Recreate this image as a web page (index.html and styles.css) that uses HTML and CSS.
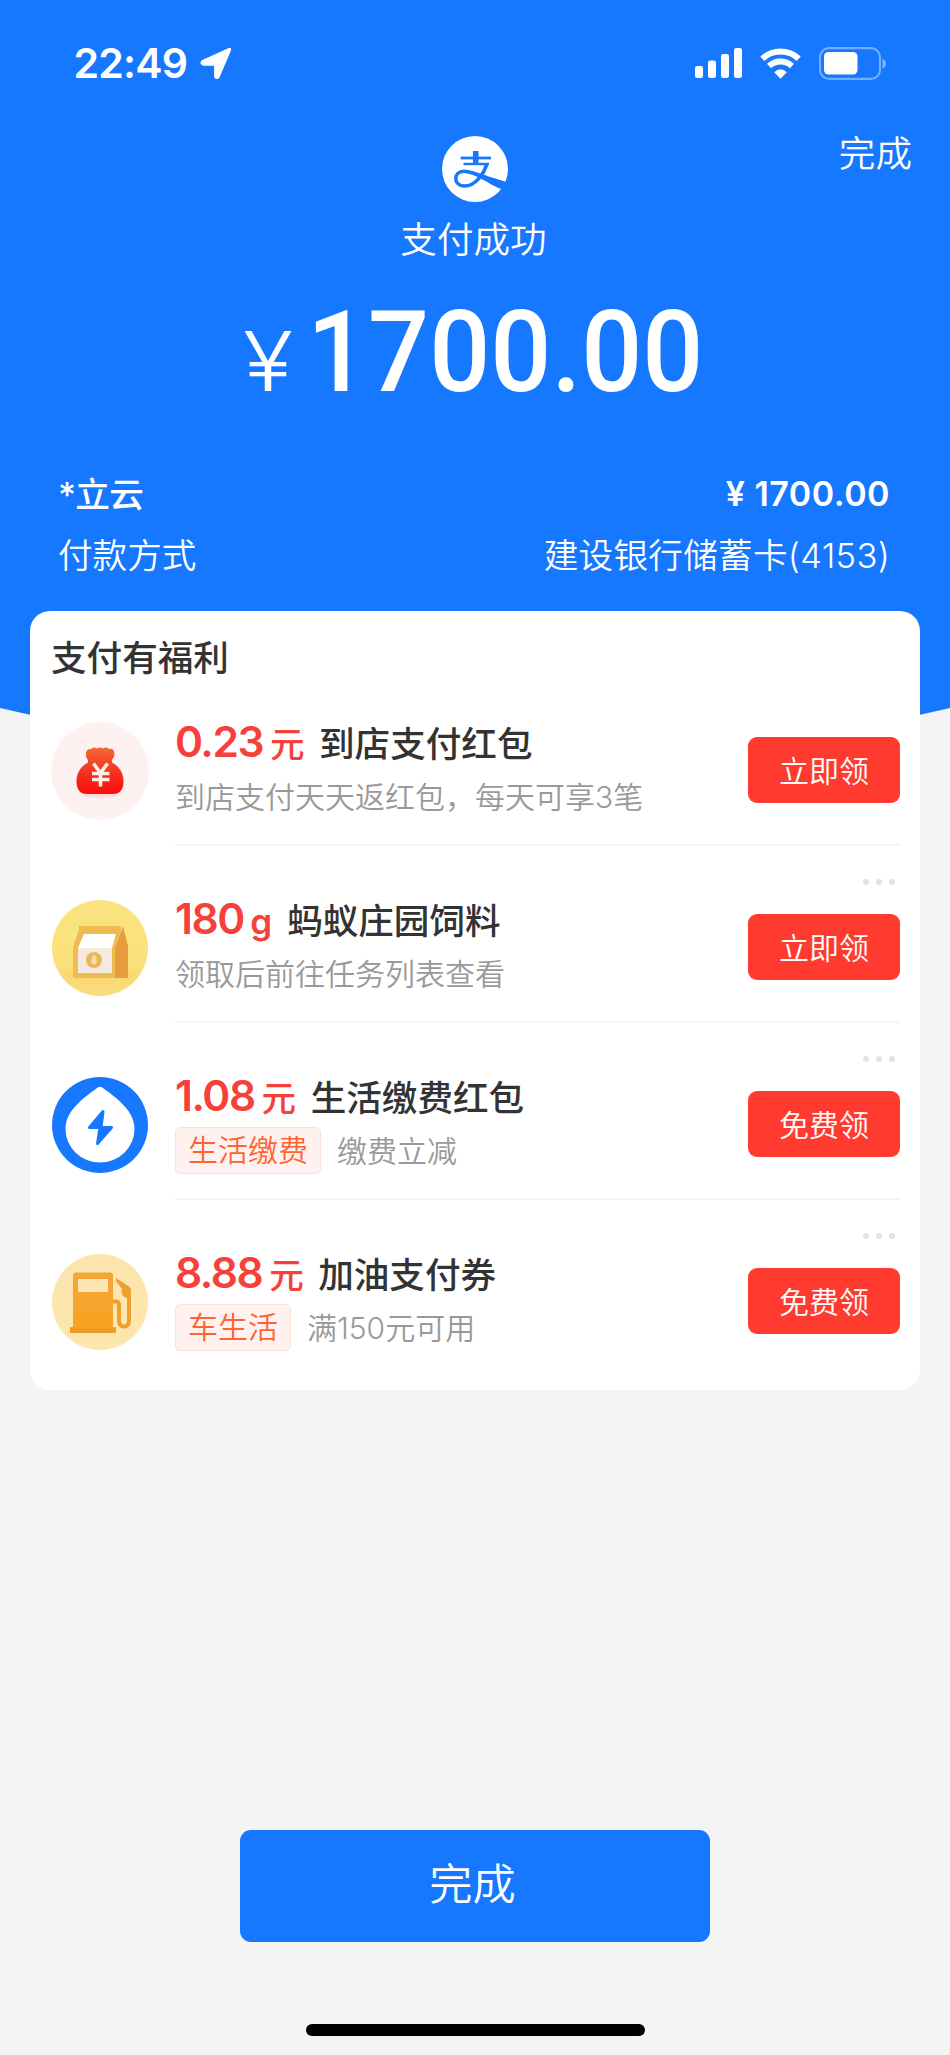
FILE: index.html
```html
<!DOCTYPE html>
<html lang="zh-CN">
<head>
<meta charset="utf-8">
<title>支付成功</title>
<link rel="stylesheet" href="styles.css">
</head>
<body>
<header class="hero">
  <div class="status">
    <div class="status-left">
      <span class="clock">22:49</span>
      <svg class="loc" viewBox="0 0 32 33"><path d="M29.500 2.500 17.800 30Q16.500 31 15.800 29.500V17H3.500Q1 16 3 14.500Z" fill="#fff" stroke="#fff" stroke-width="3.400" stroke-linejoin="round"/></svg>
    </div>
    <div class="status-right">
      <svg width="48" height="30" viewBox="0 0 48 30" fill="#fff"><rect y="18" width="8" height="12" rx="2.300"/><rect x="13" y="12.500" width="8" height="17.500" rx="2.300"/><rect x="26" y="6" width="8" height="24" rx="2.300"/><rect x="39" width="8" height="30" rx="2.300"/></svg>
      <svg class="wifi" width="41" height="31" viewBox="0 0 41 31"><g fill="none" stroke="#fff" stroke-width="6"><path d="M2.300 10.700A26.500 26.500 0 0 1 38.700 10.700"/><path d="M9 18A17 17 0 0 1 32 18"/></g><path d="M14.200 24.200Q20.500 18.500 26.800 24.200L20.500 30.800Z" fill="#fff"/></svg>
      <svg class="battery" width="68" height="33" viewBox="0 0 68 33"><rect x="1" y="1.200" width="60" height="30.600" rx="9" fill="none" stroke="#fff" stroke-opacity=".4" stroke-width="2.200"/><rect x="5" y="5" width="33.500" height="22.500" rx="4.500" fill="#fff"/><path d="M63.500 11.500Q67 13 67 16.500T63.500 21.500Z" fill="#fff" fill-opacity=".45"/></svg>
    </div>
  </div>
  <div class="topbar">
    <span></span>
    <svg class="logo" viewBox="0 0 66 66"><circle cx="33" cy="33" r="33" fill="#fff"/><g fill="none" stroke="#1677ff"><path d="M18.700 22H49" stroke-width="2.800"/><path d="M33.700 15V28" stroke-width="5.500"/><path d="M21.500 28H47" stroke-width="2.400"/><path d="M45 27.500C42 38 33 50.500 22 50C11 49.500 11 35.500 22 35.300" stroke-width="3.600"/></g><path d="M22 33.500C32 34 41 39.500 66 46.200L61 54C46 48 34 37.500 22 37Z" fill="#1677ff"/></svg>
    <a class="top-done">完成</a>
  </div>
  <p class="state">支付成功</p>
  <p class="amount"><span class="yen">¥</span><span class="digits">1700.00</span></p>
  <dl class="detail">
    <div class="detail-row strong"><dt>*立云</dt><dd class="sum">¥ 1700.00</dd></div>
    <div class="detail-row"><dt>付款方式</dt><dd class="bank">建设银行储蓄卡(4153)</dd></div>
  </dl>
</header>

<main class="card">
  <h2 class="card-title">支付有福利</h2>
  <section class="offer">
    <svg class="pic" viewBox="0 0 98 98">
      <defs><linearGradient id="bag" x1="0" y1="0" x2="0" y2="1"><stop offset="0" stop-color="#f36a33"/><stop offset=".55" stop-color="#f5301f"/><stop offset="1" stop-color="#fb0d0d"/></linearGradient></defs>
      <circle cx="49" cy="49" r="49" fill="#fef1f1"/>
      <ellipse cx="49" cy="73" rx="18" ry="3" fill="#fcdcdc"/>
      <path d="M37 38C33 33 35 26 40 27Q43 24.500 46 26.500Q49 24.500 52 26.500Q55 24.500 58 27C64 25.500 65 33 61 38L61 40.500C68 44 72.500 51 72.500 59Q72.500 72 62 72H36Q25.500 72 25.500 59C25.500 51 30 44 37 40.500Z" fill="url(#bag)"/>
      <path d="M42.500 41.500 49.500 51 56.500 41.500M49.500 50V64.500M41 51.500H58.500M41 57.500H58.500" fill="none" stroke="#fff2e6" stroke-width="3.600"/>
    </svg>
    <div class="offer-body">
      <div class="offer-main"><h3><b>0.23</b><i>元</i>到店支付红包</h3><p>到店支付天天返红包，每天可享3笔</p></div>
      <a class="get">立即领</a>
    </div>
  </section>
  <section class="offer">
    <svg class="pic" viewBox="0 0 98 98">
      <defs><linearGradient id="sun" x1="0" y1="0" x2="0" y2="1"><stop offset="0" stop-color="#fae480"/><stop offset=".68" stop-color="#fae17a"/><stop offset=".78" stop-color="#f9d871"/><stop offset="1" stop-color="#fadd7c"/></linearGradient></defs>
      <circle cx="49" cy="49" r="48" fill="url(#sun)"/>
      <path d="M28 27H70V31L64 49V79H22V48L28 31Z" fill="#eebb51"/>
      <path d="M72 27 77 47V79H64V49Z" fill="#e79d3d"/>
      <path d="M33 35H65L61 49H27Z" fill="#fff"/><path d="M27 49H61V74H27Z" fill="#f6e9df"/>
      <circle cx="43" cy="61" r="8" fill="#e9b757"/><path d="M43 55Q39 61 41 65H45Q47 61 43 55Z" fill="#f4ddb0"/>
    </svg>
    <div class="offer-body">
      <div class="offer-main"><h3><b>180</b><i class="latin">g</i>蚂蚁庄园饲料</h3><p>领取后前往任务列表查看</p></div>
      <a class="get">立即领</a>
      <span class="more"></span>
    </div>
  </section>
  <section class="offer">
    <svg class="pic" viewBox="0 0 98 98">
      <circle cx="49" cy="49" r="48" fill="#1677ff"/>
      <path d="M46 12Q49 9.500 52 12C65 22 83.500 34 83.500 53A34.500 33.500 0 0 1 14.500 53C14.500 34 33 22 46 12Z" fill="#fff"/>
      <path d="M52 35.500 38.500 51.500H49L46.500 67.500 60.500 51.500H50Z" fill="#1677ff" stroke="#1677ff" stroke-width="3" stroke-linejoin="round"/>
    </svg>
    <div class="offer-body">
      <div class="offer-main"><h3><b>1.08</b><i>元</i>生活缴费红包</h3><p><span class="tag">生活缴费</span>缴费立减</p></div>
      <a class="get">免费领</a>
      <span class="more"></span>
    </div>
  </section>
  <section class="offer">
    <svg class="pic" viewBox="0 0 98 98">
      <defs><linearGradient id="gas" x1="0" y1="0" x2="0" y2="1"><stop offset="0" stop-color="#f2a63a"/><stop offset="1" stop-color="#f9a21d"/></linearGradient></defs>
      <circle cx="49" cy="49" r="48" fill="#fde6ae"/>
      <path d="M62 48.500H65Q68 48.500 68 52V67Q68 73.500 73 73.500T78 67V42" fill="none" stroke="#eea02f" stroke-width="4"/>
      <path d="M65 25 78 33.500Q80 35 80 37V45H76Q69 43 71 36L65 28Z" fill="#eea02f"/>
      <path d="M22 22Q22 19.500 25 19.500H59Q62 19.500 62 22V74H65V80H19V74H22Z" fill="url(#gas)"/>
      <path d="M19 75H65V80H19Z" fill="#ee9b25"/>
      <rect x="27" y="26" width="30" height="13" fill="#fde6b2"/>
    </svg>
    <div class="offer-body">
      <div class="offer-main"><h3><b>8.88</b><i>元</i>加油支付券</h3><p><span class="tag">车生活</span>满150元可用</p></div>
      <a class="get">免费领</a>
      <span class="more"></span>
    </div>
  </section>
</main>

<footer class="foot">
  <button class="finish">完成</button>
  <div class="home-bar"></div>
</footer>
</body>
</html>
```

FILE: styles.css
```css
* { box-sizing: border-box; }
body, h2, h3, p, dl, dd { margin: 0; }
body {
  width: 950px;
  height: 2055px;
  display: flex;
  flex-direction: column;
  background: #f4f4f4;
  font-family: Inter, "Noto Sans CJK SC", sans-serif;
  color: #333;
  overflow: hidden;
}
svg { display: block; flex: none; }

.hero {
  height: 730px;
  flex: none;
  background: #1677ff;
  color: #fff;
  clip-path: polygon(0 0, 100% 0, 100% 708px, 919px 715px, 50% 730px, 31px 715px, 0 708px);
}
.status { display: flex; justify-content: space-between; align-items: center; height: 126px; padding: 0 63px 0 73.5px; }
.status-left, .status-right { display: flex; align-items: center; }
.clock { font-size: 41px; font-weight: 600; letter-spacing: -0.8px; line-height: 50px; }
.loc { width: 32px; height: 33px; margin-left: 13px; }
.wifi { margin-left: 17px; }
.battery { margin-left: 18px; }

.topbar { display: grid; grid-template-columns: 1fr 66px 1fr; height: 76px; padding: 10px 38px 0 37px; }
.logo { width: 66px; height: 66px; }
.top-done { justify-self: end; font-size: 36.6px; line-height: 37px; font-weight: 350; }
.state { text-align: center; padding-right: 3px; font-size: 36.6px; line-height: 50px; margin-top: 13px; font-weight: 350; }

.amount { display: flex; align-items: baseline; height: 150px; margin-top: 12px; padding-left: 242.5px; line-height: 150px; }
.yen { width: 64.5px; font-size: 82.5px; font-weight: 350; transform: scaleX(1.12); transform-origin: left; }
.digits { font-family: Roboto, sans-serif; font-weight: 500; font-size: 114px; transform: scaleX(.943); transform-origin: left; }

.detail { padding: 37px 60px 0 58px; }
.detail-row { display: flex; justify-content: space-between; height: 61px; line-height: 60px; font-size: 34.6px; font-weight: 350; }
.detail-row.strong { font-weight: 500; }
.strong dt { letter-spacing: -0.7px; }
.detail .sum { font-size: 34px; font-weight: 600; letter-spacing: .5px; }
.bank { letter-spacing: .3px; }

.card {
  position: relative;
  flex: none;
  width: 890px;
  height: 779px;
  margin: -119px 0 0 30px;
  padding: 25px 20px 0 21px;
  border-radius: 20px;
  background: #fff;
}
.card-title { font-size: 35.6px; font-weight: 500; line-height: 46px; height: 33px; }
.offer { display: grid; grid-template-columns: 98px 1fr; column-gap: 26px; height: 177px; }
.pic { width: 98px; height: 98px; margin-top: 53px; }
.offer-body { position: relative; display: flex; justify-content: space-between; border-bottom: 2px solid #f5f5f5; }
.offer:last-child .offer-body { border-bottom: 0; }
.offer-main { padding-top: 47.5px; }
.offer h3 { height: 49px; display: flex; align-items: baseline; font-size: 35.6px; font-weight: 500; line-height: 49px; }
.offer b { color: #f6403a; font-size: 42.5px; font-weight: 600; letter-spacing: -1.5px; }
.offer i { color: #f6403a; font-size: 34.6px; font-weight: 500; font-style: normal; margin: 0 14.5px 0 7px; }
.offer i.latin { font-size: 35px; font-weight: 600; margin-left: 6.5px; margin-right: 15px; }
.offer p { display: flex; align-items: center; height: 47px; margin-top: 5.5px; font-size: 30px; font-weight: 350; color: #999; }
.tag { flex: none; height: 47px; line-height: 44px; padding: 0 12px; margin: 4px 16px 0 0; border: 1.5px solid #fde0d9; border-radius: 5px; background: #fef2f0; color: #ff6430; }
.get { width: 152px; height: 66px; margin-top: 68px; border-radius: 9px; background: #ff3b30; color: #fff; font-size: 30px; font-weight: 350; line-height: 68px; text-align: center; }
.more { position: absolute; right: 31px; top: 33px; width: 6px; height: 6px; border-radius: 50%; background: #e3e3e3; box-shadow: 13px 0 #e3e3e3, 26px 0 #e3e3e3; }

.foot { margin-top: 439.5px; display: flex; flex-direction: column; align-items: center; }
.finish { width: 470px; height: 112px; padding: 0 5px 4px 0; border: 0; border-radius: 11px; background: #1677ff; color: #fff; font: 350 43.2px/104px Inter, "Noto Sans CJK SC", sans-serif; }
.home-bar { width: 339px; height: 12.5px; margin-top: 82px; border-radius: 7px; background: #000; }
```
